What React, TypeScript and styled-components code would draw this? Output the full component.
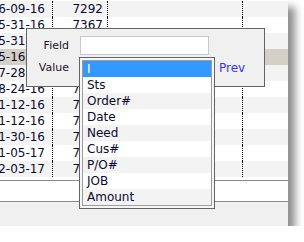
import React from "react";
import styled, { createGlobalStyle } from "styled-components";

const Global = createGlobalStyle`
  html, body { margin: 0; padding: 0; background: #ffffff; }
  body { font-family: "DejaVu Sans", Verdana, sans-serif; font-size: 12px; }
  * { box-sizing: border-box; }
`;

const Window = styled.div`
  position: relative;
  width: 288px;
  height: 226px;
  background: #f0f0f0;
  box-shadow: 7px 7px 8px rgba(0, 0, 0, 0.45);
  display: flex;
  flex-direction: column;
`;

const GridBody = styled.div`
  height: 181px;
  padding-top: 1px;
  background: #ffffff;
  border-bottom: 1px solid #8a8a8a;
  overflow: hidden;
`;

const GridRow = styled.div<{ $bg: string }>`
  display: grid;
  grid-template-columns: 53px 55px 135px 1fr;
  height: 16px;
  line-height: 16px;
  background: ${(p) => p.$bg};
  color: #0a0a30;
`;

const Cell = styled.div<{ $align?: "left" | "right"; $pad?: number; $dotted?: boolean }>`
  display: flex;
  justify-content: ${(p) => (p.$align === "right" ? "flex-end" : "flex-start")};
  padding-right: ${(p) => p.$pad ?? 0}px;
  overflow: hidden;
  white-space: nowrap;
  border-right: ${(p) => (p.$dotted ? "1px dotted #000" : "none")};
`;

const Footer = styled.div`
  height: 21px;
  background: #ffffff;
  border-bottom: 1px solid #8a8a8a;
`;

const BottomPanel = styled.div`
  flex: 1;
  background: #f0f0f0;
`;

const Dialog = styled.div`
  position: absolute;
  left: 26px;
  top: 28px;
  width: 239px;
  height: 59px;
  border: 1px solid #646464;
  background: #f0f0f0;
  padding-top: 7px;
  display: grid;
  grid-template-columns: 43px 129px auto;
  grid-template-rows: 19px 20px;
  column-gap: 10px;
  row-gap: 2px;
  align-items: center;
  z-index: 2;
`;

const Label = styled.div`
  text-align: right;
  padding-right: 1px;
  font-size: 11px;
  color: #221128;
`;

const TextInput = styled.input`
  width: 129px;
  height: 19px;
  border: 1px solid #c8c8c8;
  background: #ffffff;
  padding: 0 3px;
  margin: 0;
  font: inherit;
  outline: none;
`;

const ValueSlot = styled.div`
  position: relative;
  height: 20px;
`;

const ListBox = styled.div`
  position: absolute;
  left: -1px;
  top: 0;
  width: 136px;
  border: 1px solid #646464;
  padding: 2px;
  background: #f6f6f6;
`;

const ListInner = styled.div`
  border: 1px solid #9c9c9c;
  background: #ffffff;
`;

const ListItem = styled.div<{ $bg: string; $selected?: boolean }>`
  height: 16px;
  line-height: 16px;
  padding-left: 4px;
  font-size: 12px;
  white-space: nowrap;
  background: ${(p) => (p.$selected ? "#3399ff" : p.$bg)};
  color: ${(p) => (p.$selected ? "#ffffff" : "#0a0a30")};
`;

const PrevLink = styled.a`
  font-size: 12px;
  color: #3535f0;
  text-decoration: none;
  align-self: center;
  padding-top: 2px;
`;

const rows = [
  { d: "06-09-16", n: "7292" },
  { d: "05-31-16", n: "7367" },
  { d: "05-31-16", n: "7368" },
  { d: "05-16-16", n: "7340", selected: true },
  { d: "07-28-16", n: "7415" },
  { d: "08-24-16", n: "7458" },
  { d: "11-12-16", n: "7521" },
  { d: "11-12-16", n: "7522" },
  { d: "11-30-16", n: "7560" },
  { d: "01-05-17", n: "7604" },
  { d: "02-03-17", n: "7633" },
];

const fields = ["I", "Sts", "Order#", "Date", "Need", "Cus#", "P/O#", "JOB", "Amount"];

export default function App() {
  return (
    <>
      <Global />
      <Window>
        <GridBody>
          {rows.map((r, i) => (
            <GridRow key={i} $bg={r.selected ? "#d4d0c8" : i % 2 === 0 ? "#f3f3f3" : "#ffffff"}>
              <Cell $align="right" $pad={7} $dotted>
                {r.d}
              </Cell>
              <Cell $align="right" $pad={4} $dotted>
                {r.n}
              </Cell>
              <Cell $dotted />
              <Cell />
            </GridRow>
          ))}
        </GridBody>
        <Footer />
        <BottomPanel />
        <Dialog>
          <Label>Field</Label>
          <TextInput defaultValue="" />
          <span />
          <Label>Value</Label>
          <ValueSlot>
            <ListBox>
              <ListInner>
                {fields.map((f, i) => (
                  <ListItem key={f} $selected={i === 0} $bg={i % 2 === 0 ? "#f3f3f3" : "#ffffff"}>
                    {f}
                  </ListItem>
                ))}
              </ListInner>
            </ListBox>
          </ValueSlot>
          <PrevLink href="#">Prev</PrevLink>
        </Dialog>
      </Window>
    </>
  );
}
